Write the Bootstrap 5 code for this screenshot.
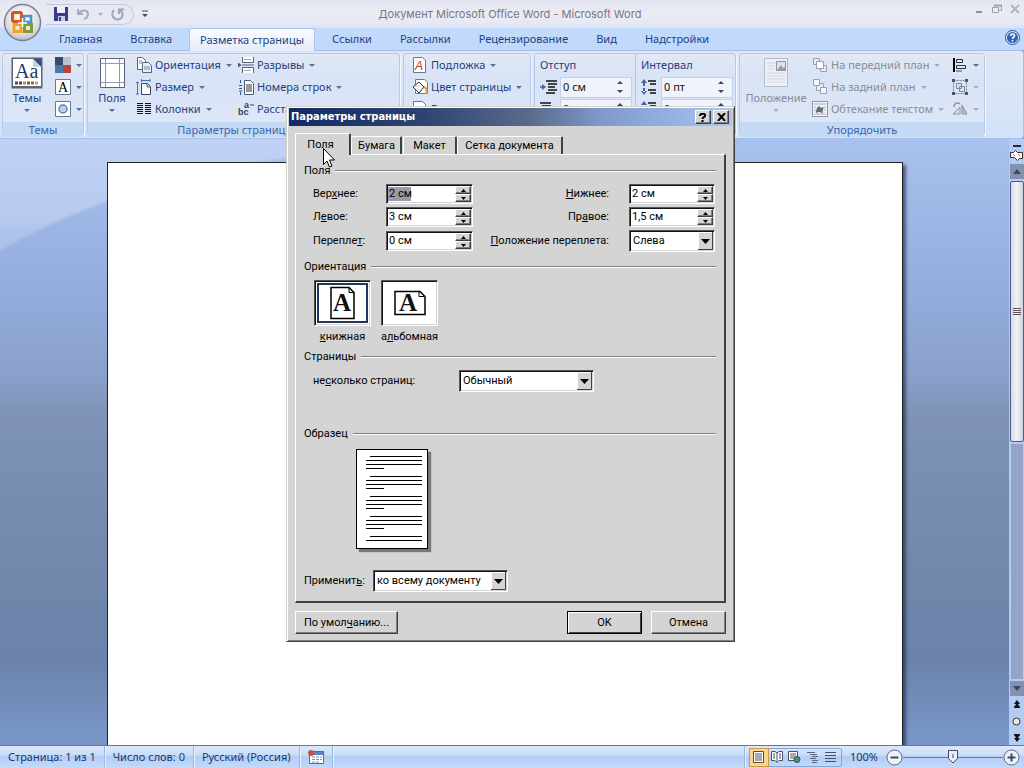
<!DOCTYPE html>
<html lang="ru">
<head>
<meta charset="utf-8">
<meta name="viewport" content="width=device-width, initial-scale=1">
<title>Документ Microsoft Office Word - Microsoft Word</title>
<link href="https://cdn.jsdelivr.net/npm/bootstrap@5.3.0/dist/css/bootstrap.min.css" rel="stylesheet">
<style>
  :root { --ink: #1f4080; --face: #d4d4d4; --shade: #808080; --dark: #404040; }
  body { font: 11px/16px "Noto Sans", "Open Sans", sans-serif; color: var(--ink); background: #8fa8d6; overflow: hidden; }
  svg { display: block; flex: none; }
  button, input, select { font: inherit; color: inherit; }
  button { border: 0; background: none; padding: 0; white-space: nowrap; }
  .shell { min-height: 100vh; }

  /* title bar */
  .titlebar { height: 28px; background: linear-gradient(#e3e6f1, #ebebf3 50%, #e6e9f5 85%, #d6e4fa); }
  .title-side { flex: 1 1 0; }
  .office-btn { top: 3px; left: 3px; z-index: 3; }
  .quick { height: 21px; width: 88px; margin-left: 46px; padding-left: 8px; border: 1px solid #c3c8da; border-left: 0; border-radius: 0 11px 11px 0; background: #e6e8f2; gap: 8px; }
  .doc-title { font: 11px/16px Inter, sans-serif; color: #747884; }
  .win-btns { gap: 8px; padding-right: 4px; }

  /* ribbon */
  .tabrow { height: 22px; padding-left: 45px; background: linear-gradient(#c3dafb, #bfd8fd); }
  .rtab { padding: 0 14px; height: 22px; color: var(--ink); }
  .rtab.on { padding: 0 10px; margin: 0 3px; height: 23px; background: linear-gradient(#fbfcff, #e3ebf8); border: 1px solid #a9c4ee; border-bottom: 0; border-radius: 3px 3px 0 0; }
  .ribbon { height: 89px; padding: 2px; gap: 3px; background: linear-gradient(#dfe7f5, #d9e4f7 60%, #d3e3fa); border: solid #a5bfe6; border-width: 1px 1px 1px 0; border-radius: 0 4px 4px 0; overflow: hidden; }
  .rgroup { border: 1px solid #b7c9e6; border-radius: 3px; background: linear-gradient(#e1e8f6, #d8e3f5 30%, #dee7f8); box-shadow: 1px 1px 0 #f2f6fd; flex: none; }
  .rgroup-body { height: 68px; }
  .rgroup-name { height: 15px; line-height: 15px; text-align: center; background: #c4d9f4; color: #3a66ab; }
  .g-themes { width: 82px; } .g-page { width: 313px; } .g-back { width: 128px; } .g-par { width: 202px; } .g-arr { width: 246px; }
  .g-page .rgroup-name { padding-right: 16px; }
  .big { display: flex; flex-direction: column; align-items: center; padding-top: 3px; }
  .big svg { height: 32px; }
  .big::after, .drop::after { content: ""; border: solid transparent; border-width: 3px 3px 0; border-top-color: #5b7193; }
  .big::after { margin-top: 3px; }
  .big .cap { line-height: 16px; margin-top: 1px; }
  .drop { display: flex; align-items: center; gap: 3px; height: 22px; }
  .drop::after { margin-left: 2px; }
  .w-48 { width: 48px; } .w-72 { width: 72px; } .w-102 { width: 102px; } .w-140 { width: 140px; }
  .off { color: #8a8d96; }
  .off::after { border-top-color: #a6abb8 !important; }
  .spin-col { width: 101px; padding-left: 5px; }
  .spin-col + .spin-col { border-left: 1px solid #b4c5e2; }
  .spin-col .head { height: 22px; line-height: 22px; }
  .spin { display: flex; align-items: center; height: 22px; gap: 3px; }
  .spin .box { width: 72px; height: 21px; border: 1px solid #c2d1ea; background: #f0f3fb; }
  .spin input { width: 52px; border: 0; background: none; padding: 0 2px; color: #111; }
  .spin .arrows { width: 14px; }

  /* work area */
  .work { background: linear-gradient(#a9c1ee, #92abdb 27%, #8aa0cb 39%, #7e93b5 45%, #7288ac 70%, #6b83ab 86%, #7a97ca); }
  .swoosh { inset: 0 auto auto 0; width: 40%; height: 170px; background: radial-gradient(ellipse 620px 420px at 400px 430px, transparent 99%, rgba(225,235,255,.4) 100%); mask-image: linear-gradient(#000 40%, transparent); -webkit-mask-image: linear-gradient(#000 40%, transparent); }
  .paper { width: 796px; margin-top: 23px; background: #fff; border: 1px solid #222; border-bottom: 0; box-shadow: 3px 3px 3px rgba(30,40,70,.65); }
  .scroll { width: 15px; background: #b4cbf3; gap: 2px; padding-top: 6px; }
  .split { width: 8px; height: 2px; background: #222b44; }
  .arrow-cell { width: 14px; height: 15px; background: #8492b0; }
  .thumb { width: 14px; height: 261px; background: linear-gradient(90deg, #d7dae5, #f1f2f7 45%, #cfd3e0); border: 1px solid #4a5c85; border-radius: 2px; }
  .track { width: 12px; background: #95a4c6; }
  .browse { gap: 8px; padding: 2px 0; }

  /* status bar */
  .status { height: 23px; background: linear-gradient(#dde9fb, #c9dcf8 40%, #b3cdf5 50%, #c4daf9); border-top: 1px solid #5d78a8; color: #17366e; line-height: 14px; }
  .status .cell { display: flex; align-items: center; border-right: 1px solid #9cb7e2; box-shadow: 1px 0 0 #e6effc; padding: 0 8px; }
  .views { width: 93px; height: 19px; border: 1px solid #8aa5d3; border-radius: 2px; }
  .views button { width: 18px; height: 17px; display: flex; align-items: center; justify-content: center; }
  .views .on { background: #fbd58c; outline: 1px solid #c99a4c; }
  .zoomer { appearance: none; -webkit-appearance: none; width: 100px; height: 16px; margin: 0; background: linear-gradient(#5f7fb2, #5f7fb2) center/100% 1px no-repeat; }
  .zoomer::-webkit-slider-thumb { -webkit-appearance: none; width: 10px; height: 14px; background: url("data:image/svg+xml,%3Csvg xmlns='http://www.w3.org/2000/svg' width='10' height='14'%3E%3Cpath d='M.5.5h9v8L5 13 .5 8.500z' fill='%23e8effa' stroke='%23446'/%3E%3Cpath d='M5 4v4' stroke='%23446'/%3E%3C/svg%3E"); }

  /* dialog */
  .stage { inset: 0; z-index: 5; padding: 106px 3px 0 0; pointer-events: none; }
  .dlg { font: 11px/16px Roboto, "DejaVu Sans Condensed", sans-serif; color: #000; width: 449px; background: var(--face); padding: 1px 2px; border: 1px solid; border-color: #d4d0c8 #404040 #404040 #d4d0c8; box-shadow: inset 1px 1px #fff, inset -1px -1px #808080; pointer-events: auto; }
  .dlg-title { height: 18px; padding: 0 3px 0 2px; background: linear-gradient(90deg, #142a63, #2f4372 30%, #5b6c8c 55%, #7e98cc 70%, #a8c6f5); color: #fff; font: bold 11px/18px "DejaVu Sans Condensed", sans-serif; }
  .raised { background: var(--face); border: 1px solid; border-color: #fff var(--dark) var(--dark) #fff; box-shadow: inset -1px -1px var(--shade); }
  .dlg-title button { width: 16px; height: 14px; display: flex; align-items: center; justify-content: center; color: #000; }
  .dlg-title button + button { margin-left: 2px; }
  .sheet-tabs { padding-left: 6px; margin-top: 6px; height: 22px; }
  .stab { height: 18px; margin-left: 1px; padding: 0 6px; border: solid; border-width: 1px 2px 0 1px; border-color: #fff var(--dark) #fff #fff; border-radius: 2px 2px 0 0; }
  .stab.on { height: 22px; width: 56px; margin: 0 0 -1px; padding-left: 0; padding-right: 4px; background: var(--face); position: relative; }
  .stab:nth-child(2) { width: 51px; margin-left: 0; } .stab:nth-child(3) { width: 54px; } .stab:nth-child(4) { width: 106px; margin-left: 0; }
  .pane { margin: 0 6px; padding: 8px 8px 9px; border: solid; border-width: 1px 2px 2px 1px; border-color: #fff var(--dark) var(--dark) #fff; }
  fieldset { min-width: 0; }
  .cap-line { display: flex; align-items: center; gap: 5px; height: 16px; float: none; margin: 0; font-size: 11px; line-height: 16px; }
  .cap-line::after { content: ""; flex: 1; height: 2px; background: linear-gradient(#808080 50%, #fff 50%); }
  .margins { display: grid; grid-template-columns: 73px 87px 1fr 86px; grid-template-rows: 20px 20px 22px; row-gap: 3px; align-items: center; padding: 5px 1px 0 9px; }
  .margins .end { text-align: right; padding-right: 20px; }
  .sunk { background: #fff; border: 1px solid; border-color: #555 #fff #fff #555; box-shadow: inset 1px 1px #111, inset -1px -1px var(--face); }
  .num { display: flex; height: 20px; padding: 1px; }
  .num input { flex: 1; width: 20px; min-width: 0; border: 0; padding: 0 0 0 1px; outline: 0; background: none; }
  .num .marked { background: linear-gradient(#9a9ba6, #9a9ba6) 0 50%/23px 14px no-repeat; }
  .num .ud { display: flex; flex-direction: column; }
  .num .ud button { width: 16px; height: 8px; display: flex; align-items: center; justify-content: center; }
  .pick { appearance: none; -webkit-appearance: none; height: 22px; width: 100%; padding: 0 18px 0 3px; border-radius: 0;
    background: #fff url("data:image/svg+xml,%3Csvg xmlns='http://www.w3.org/2000/svg' width='15' height='18'%3E%3Cpath fill='%23d4d4d4' d='M0 0h15v18H0z'/%3E%3Cpath d='M.5 18V.5H15' stroke='%23fff' fill='none'/%3E%3Cpath d='M14.500 0v17.500H0' stroke='%23404040' fill='none'/%3E%3Cpath d='M3 7h9l-4.500 5z'/%3E%3C/svg%3E") right 1px center no-repeat; }
  .orient { margin-top: 7px; }
  .choices { gap: 10px; padding: 5px 0 0 10px; }
  .choice { width: 57px; text-align: center; }
  .choice .sunk { height: 46px; width: 57px; display: flex; align-items: center; justify-content: center; }
  .choice .txt { display: block; margin: 3px -5px 0; }
  .choice input:checked + .sunk { outline: 2px solid #24345e; outline-offset: -5px; }
  .pages-row { padding: 5px 0 0 9px; }
  .pages-row label { width: 146px; }
  .sample { margin-top: 34px; }
  .preview { margin: 7px 0 0 52px; width: 72px; height: 100px; background: #fff; border: 1px solid #000; box-shadow: 3px 3px 1px #777; }
  .apply { margin-top: 21px; }
  .apply label { width: 69px; }
  .w-135 { width: 135px; }
  .dlg-foot { padding: 8px 6px 6px; gap: 9px; }
  .dlg-foot button { height: 23px; width: 75px; }
  .dlg-foot .wide { width: 103px; }
  .dlg-foot .main { outline: 1px solid #000; outline-offset: -1px; border-color: #000; box-shadow: inset 1px 1px #fff, inset -1px -1px var(--dark); }
  .pointer { left: 36px; top: 41px; z-index: 4; }
</style>
</head>
<body>
<div class="shell d-flex flex-column position-relative">

  <header class="position-relative">
    <button class="office-btn position-absolute" aria-label="Office">
      <svg width="39" height="39" viewBox="0 0 39 39">
        <defs><radialGradient id="orb" cx=".5" cy=".35" r=".7"><stop offset="0" stop-color="#fff"/><stop offset=".7" stop-color="#dcdde4"/><stop offset="1" stop-color="#a9acb8"/></radialGradient></defs>
        <circle cx="19.500" cy="19.500" r="18" fill="url(#orb)" stroke="#7d808c" stroke-width="1.500"/>
        <g fill="none" stroke-width="3">
          <rect x="9.500" y="9.500" width="9" height="9" rx="1.500" stroke="#d9541e"/>
          <path d="M21 13h7v6h-7z" stroke="#4b91cc" stroke-width="2.500"/>
          <path d="M11 21.500h7v7h-7z" stroke="#f2a51c"/>
          <path d="M21.500 21.500h7v7h-7z" stroke="#7b9f35"/>
        </g>
        <path d="M15 20h9M19.500 15v9" stroke="#fff" stroke-width="1.500"/>
      </svg>
    </button>
    <div class="titlebar d-flex align-items-center">
      <div class="title-side d-flex align-items-center">
        <div class="quick d-flex align-items-center">
          <button aria-label="Сохранить"><svg width="14" height="14"><path d="M0 0h14v14H0z" fill="#3a3b8c"/><path d="M3 0h8v6H3z" fill="#eef0fa"/><path d="M4 9h7v5H4z" fill="#c8cce8"/><path d="M5 10h2v4H5z" fill="#3a3b8c"/></svg></button>
          <button aria-label="Отменить"><svg width="14" height="12" fill="none" stroke="#a6abba" stroke-width="2"><path d="M2 1v5h5M2.500 5.500C6 1 12 2 12 6c0 2-1 4-4 5"/></svg></button>
          <svg width="5" height="3"><path d="M0 0h5L2.500 3z" fill="#a6abba"/></svg>
          <button aria-label="Вернуть"><svg width="13" height="13" fill="none" stroke="#a0a6b8" stroke-width="2"><path d="M3 2C0 5 1 11 6.500 11.500 12 11 13 5 9 2M8 6V1.500h5"/></svg></button>
        </div>
        <button class="ms-2" aria-label="Настройка панели"><svg width="8" height="8"><path d="M0 1h6" stroke="#4a4a5c"/><path d="M0 4h6L3 7z" fill="#4a4a5c"/></svg></button>
      </div>
      <div class="doc-title">Документ Microsoft Office Word - Microsoft Word</div>
      <div class="title-side win-btns d-flex justify-content-end align-self-start mt-1">
        <button aria-label="Свернуть"><svg width="10" height="10"><path d="M2 8h6" stroke="#8d90a0" stroke-width="2"/></svg></button>
        <button aria-label="Восстановить"><svg width="10" height="10" fill="none" stroke="#a0a3b0"><path d="M.5 3.500h6v5h-6zM2.500 3V1.500h7v5H7"/><path d="M2 1.500h8" stroke-width="2"/></svg></button>
        <button aria-label="Закрыть"><svg width="10" height="10" stroke="#b2b5c0" stroke-width="2"><path d="M1 1l8 8M9 1L1 9"/></svg></button>
      </div>
    </div>
    <nav class="tabrow d-flex">
      <button class="rtab">Главная</button><button class="rtab">Вставка</button><button class="rtab on">Разметка страницы</button><button class="rtab">Ссылки</button><button class="rtab">Рассылки</button><button class="rtab">Рецензирование</button><button class="rtab">Вид</button><button class="rtab">Надстройки</button>
      <button class="ms-auto me-1 mb-1" aria-label="Справка"><svg width="15" height="15"><circle cx="7.500" cy="7.500" r="7" fill="#dfe8f8" stroke="#274f96"/><circle cx="7.500" cy="7.500" r="5.500" fill="#2e63bb"/><path d="M5.500 6c0-3 4.500-2.500 4 0-.3 1-2 1.200-2 3M7.500 10v1.500" fill="none" stroke="#fff" stroke-width="1.600"/></svg></button>
    </nav>

    <div class="ribbon d-flex">
      <section class="rgroup g-themes">
        <div class="rgroup-body d-flex">
          <button class="big w-48"><svg width="32" height="32"><path d="M.5.500h31v31H.5z" fill="#5d6478"/><path d="M2 2h28v27H2z" fill="#fff"/><path d="M22 2h8v8z" fill="#35507c"/><path d="M22 2v8h8" fill="#c9d3e8"/><text x="4" y="21" font-family="Liberation Serif, serif" font-size="20" fill="#203c66">Aa</text><path d="M4 26h3" stroke="#7a3b24" stroke-width="3"/><path d="M8 26h3" stroke="#3d4a66" stroke-width="3"/><path d="M12 26h3" stroke="#c98d2c" stroke-width="3"/><path d="M16 26h3" stroke="#805a3a" stroke-width="3"/><path d="M20 26h3" stroke="#6d7c4a" stroke-width="3"/><path d="M24 26h3" stroke="#c7a54c" stroke-width="3"/></svg><span class="cap">Темы</span></button>
          <div class="ps-1">
            <button class="drop" aria-label="Цвета"><svg width="16" height="16"><path d="M0 0h8v8H0z" fill="#35496b"/><path d="M8 0h8v8H8z" fill="#b9c3d4"/><path d="M0 8h8v8H0z" fill="#4f78a4"/><path d="M8 8h8v8H8z" fill="#b4483f"/></svg></button>
            <button class="drop" aria-label="Шрифты"><svg width="16" height="16"><path d="M.5.500h15v15H.5z" fill="#fff" stroke="#6c7890"/><text x="3" y="13" font-family="Liberation Serif, serif" font-size="14">A</text></svg></button>
            <button class="drop" aria-label="Эффекты"><svg width="16" height="16"><path d="M.5.500h15v15H.5z" fill="#fff" stroke="#6c7890"/><circle cx="8" cy="8" r="4" fill="#b8d2f2" stroke="#5c80b0" stroke-width="1.500"/></svg></button>
          </div>
        </div>
        <div class="rgroup-name">Темы</div>
      </section>

      <section class="rgroup g-page">
        <div class="rgroup-body d-flex">
          <button class="big w-48"><svg width="25" height="32"><path d="M.5 1.500h24v29H.5z" fill="#fff" stroke="#59637c"/><path d="M5.500 2v28M19.500 2v28M1 6.500h23M1 25.500h23" stroke="#8e9ab4"/></svg><span class="cap">Поля</span></button>
          <div class="w-102">
            <button class="drop"><svg width="16" height="16"><path d="M1.500.500h5l3 3v9h-8z" fill="#fff" stroke="#566580"/><path d="M6.500 5.500h6l3 3v7h-9z" fill="#e9eefa" stroke="#566580"/><path d="M3 4h3M3 6h3M8 10h6M8 12h6" stroke="#7d8db0"/></svg>Ориентация</button>
            <button class="drop"><svg width="16" height="16" fill="none" stroke="#4f6ea6"><path d="M1.500 3v12M0 3.500h3M0 15h3M5 1.500h9M5.500 0v3M14 0v3"/><path d="M5.500 4.500h6l3 3v8h-9z" fill="#fff" stroke="#39465f"/><path d="M11 5v3h3" fill="#f0c36a"/></svg>Размер</button>
            <button class="drop"><svg width="16" height="16" stroke="#111" stroke-width="1"><path d="M1 2.500h6M9 2.500h6M1 4.500h6M9 4.500h6M1 6.500h6M9 6.500h6M1 8.500h6M9 8.500h6M1 10.500h6M9 10.500h6M1 12.500h6M9 12.500h6"/></svg>Колонки</button>
          </div>
          <div>
            <button class="drop"><svg width="16" height="16" fill="#fff" stroke="#56647e"><path d="M4.500 0v5.500h11V0M4.500 16v-5.500h11V16"/><path d="M4 8h12" stroke="#56647e"/><path d="M0 6l3 2-3 2z" fill="#33476e"/><path d="M6 2.500h7M6 13.500h7" stroke="#9ab"/></svg>Разрывы</button>
            <button class="drop"><svg width="16" height="16"><path d="M6.500 1.500h6l3 3v11h-9z" fill="#fff" stroke="#4d5a76"/><path d="M8 6h6M8 8h6M8 10h6M8 12h6" stroke="#333"/><path d="M2.500 1v3M1 6.500h3M1 9.500h3M1 12h3M2.500 13v3" stroke="#35548c"/></svg>Номера строк</button>
            <button class="drop"><svg width="16" height="16" font-family="Liberation Sans, sans-serif" font-weight="bold" font-size="9" fill="#35425c"><text x="0" y="14">bc</text><text x="6" y="7">a</text><path d="M12 4h4" stroke="#35425c"/></svg>Расстановка переносов</button>
          </div>
        </div>
        <div class="rgroup-name">Параметры страницы</div>
      </section>

      <section class="rgroup g-back">
        <div class="rgroup-body ps-2">
          <button class="drop"><svg width="16" height="16"><path d="M1.500.500h9l3 3v12h-12z" fill="#fff" stroke="#6b7690"/><text x="3" y="13" font-family="Liberation Sans, sans-serif" font-size="12" font-style="italic" fill="#c0392b">A</text></svg>Подложка</button>
          <button class="drop"><svg width="16" height="16"><path d="M3.500.500h9l3 3v11h-12z" fill="#fff" stroke="#6b7690"/><path d="M1 8l6-5 5 5-5 6z" fill="#f4f4f0" stroke="#333"/><path d="M12 8c3 1 3 4 2 7" stroke="#e39a3b" stroke-width="2" fill="none"/></svg>Цвет страницы</button>
          <button class="drop"><svg width="16" height="16"><path d="M1.500.500h9l3 3v12h-12z" fill="#fff" stroke="#6b7690"/></svg>Границы страниц</button>
        </div>
        <div class="rgroup-name">Фон страницы</div>
      </section>

      <section class="rgroup g-par">
        <div class="rgroup-body d-flex">
          <div class="spin-col">
            <div class="head">Отступ</div>
            <div class="spin"><svg width="17" height="16" stroke="#111" stroke-width="1.500"><path d="M6 2h11M8 5h9M8 8h7M8 11h9M6 14h9"/><path d="M0 8h3" stroke="#47669e"/><path d="M2 5l4 3-4 3z" fill="#47669e" stroke="none"/></svg><div class="box d-flex align-items-center"><input aria-label="Отступ слева" value="0 см"><svg class="arrows" width="14" height="16" fill="#3c4658"><path d="M4 5h6L7 2zM4 11h6l-3 3z"/></svg></div></div>
            <div class="spin"><svg width="17" height="16" stroke="#111" stroke-width="1.500"><path d="M0 2h11M2 5h9M2 8h7M2 11h9M0 14h9"/></svg><div class="box d-flex align-items-center"><input aria-label="Отступ справа" value="0 см"><svg class="arrows" width="14" height="16" fill="#3c4658"><path d="M4 5h6L7 2zM4 11h6l-3 3z"/></svg></div></div>
          </div>
          <div class="spin-col">
            <div class="head">Интервал</div>
            <div class="spin"><svg width="17" height="16"><path d="M7 2h8M9 5h6M7 11h8M9 14h6" stroke="#111" stroke-width="1.500"/><path d="M0 4l3-4 3 4zM0 12l3 4 3-4zM2 3h2v4H2zM2 9h2v4H2z" fill="#47669e"/></svg><div class="box d-flex align-items-center"><input aria-label="Интервал до" value="0 пт"><svg class="arrows" width="14" height="16" fill="#3c4658"><path d="M4 5h6L7 2zM4 11h6l-3 3z"/></svg></div></div>
            <div class="spin"><svg width="17" height="16"><path d="M7 2h8M9 5h6M7 11h8M9 14h6" stroke="#111" stroke-width="1.500"/><path d="M0 4l3-4 3 4z" fill="#47669e"/></svg><div class="box d-flex align-items-center"><input aria-label="Интервал после" value="0 пт"><svg class="arrows" width="14" height="16" fill="#3c4658"><path d="M4 5h6L7 2zM4 11h6l-3 3z"/></svg></div></div>
          </div>
        </div>
        <div class="rgroup-name">Абзац</div>
      </section>

      <section class="rgroup g-arr">
        <div class="rgroup-body d-flex">
          <button class="big w-72 off"><svg width="25" height="32"><path d="M.5 1.500h23v28H.5z" fill="#eef0f6" stroke="#b3b9c9"/><path d="M3 6h8M3 9h8M3 12h8M3 16h18M3 19h18M3 22h18M3 25h18" stroke="#d0d4e0"/><path d="M12.500 4.500h9v9h-9z" fill="#dfe2ea" stroke="#8e95a6"/><path d="M13 13l4-5 2 3 2-1v3z" fill="#969cac"/></svg><span class="cap">Положение</span></button>
          <div class="w-140">
            <button class="drop off"><svg width="16" height="16" fill="#e8ebf2" stroke="#98a0b2"><path d="M1.500 1.500h6v6h-6z"/><path d="M9.500 8.500h5v6h-6v-4"/><path d="M4.500 4.500h7v7h-7z" fill="#fff"/></svg>На передний план</button>
            <button class="drop off"><svg width="16" height="16" fill="#e8ebf2" stroke="#98a0b2"><path d="M4.500 4.500h7v7h-7z"/><path d="M1.500.500h6v6h-6zM8.500 8.500h6v6h-6z" fill="#f6f7fb"/></svg>На задний план</button>
            <button class="drop off"><svg width="16" height="16"><path d="M.5.500h15v15H.5z" fill="#f2f3f7" stroke="#8f96a6"/><path d="M2 3h12M2 6h2M12 6h2M2 9h2M12 9h2M2 13h12" stroke="#a9aebb"/><path d="M4 12c0-4 1-6 3-7 1 2 3 2 5 1-1 2-2 6-1 7-2-2-4-3-7-1z" fill="#666b78"/></svg>Обтекание текстом</button>
          </div>
          <div>
            <button class="drop" aria-label="Выровнять"><svg width="16" height="16" fill="none"><path d="M2 1v14" stroke="#000" stroke-width="2"/><path d="M4.500 2.500h6v3h-6zM4.500 8.500h9v3h-9z" stroke="#333"/><path d="M4 14h6" stroke="#35548c"/></svg></button>
            <button class="drop off" aria-label="Группировать"><svg width="16" height="16" fill="none" stroke="#7d8496"><path d="M1.500 1.500h13v13h-13z" stroke-dasharray="2 1"/><path d="M4.500 4.500h5v5h-5zM7.500 7.500h5v5h-5z"/><path d="M0 1.500h3M13 1.500h3M0 14.500h3M13 14.500h3" stroke="#4d5468" stroke-width="3"/></svg></button>
            <button class="drop off" aria-label="Повернуть"><svg width="16" height="16"><path d="M1 13h7V6z" fill="#d6d9e2" stroke="#8d93a3"/><path d="M10 13V4l5 9z" fill="#b5bac8" stroke="#8d93a3"/><path d="M2 6c0-4 3-5 6-3" fill="none" stroke="#8d93a3" stroke-width="1.500"/></svg></button>
          </div>
        </div>
        <div class="rgroup-name">Упорядочить</div>
      </section>
    </div>
  </header>

  <main class="work flex-grow-1 d-flex position-relative">
    <div class="swoosh position-absolute"></div>
    <div class="flex-grow-1 d-flex justify-content-center overflow-hidden position-relative">
      <div class="paper"></div>
    </div>
    <div class="scroll d-flex flex-column align-items-center">
      <div class="split"></div>
      <svg width="13" height="13"><path d="M.5 3.500h3l2-2 2 2h5v6h-3l-2 2-3-3h-4z" fill="#fff" stroke="#333"/><path d="M3 5l2 2M8 5l2 2" stroke="#c55"/></svg>
      <div class="arrow-cell d-flex align-items-center justify-content-center"><svg width="8" height="5"><path d="M4 0l4 5H0z" fill="#3b4866"/></svg></div>
      <div class="thumb d-flex align-items-center justify-content-center"><svg width="8" height="9"><path d="M0 1.500h8M0 3.500h8M0 5.500h8M0 7.500h8" stroke="#62545c"/></svg></div>
      <div class="track flex-grow-1"></div>
      <div class="arrow-cell d-flex align-items-center justify-content-center"><svg width="8" height="5"><path d="M0 0h8L4 5z" fill="#3b4866"/></svg></div>
      <div class="browse d-flex flex-column align-items-center">
        <svg width="8" height="9"><path d="M4 0l3 4H1zM4 3l3 4H1zM1 7h6v1H1z" fill="#111"/></svg>
        <svg width="9" height="9"><circle cx="4.500" cy="4.500" r="3.500" fill="#e8e8e8" stroke="#333"/></svg>
        <svg width="8" height="9"><path d="M1 0h6v1H1zM1 1h6L4 5zM1 4h6L4 8z" fill="#111"/></svg>
      </div>
    </div>
  </main>

  <footer class="status d-flex">
    <div class="cell">Страница: 1 из 1</div>
    <div class="cell">Число слов: 0</div>
    <div class="cell">Русский (Россия)</div>
    <div class="cell"><svg width="16" height="14"><path d="M1.500 1.500h14v12h-14z" fill="#fff" stroke="#4d6a9c"/><path d="M2 2h13v3H2z" fill="#5d86c4"/><path d="M4 7h3M8 7h3M12 7h2M4 9.500h3M8 9.500h3M12 9.500h2M4 12h3M8 12h3" stroke="#7d93b8"/><circle cx="3" cy="3" r="3" fill="#c4553c"/></svg></div>
    <div class="cell flex-grow-1"></div>
    <div class="d-flex align-items-center ps-1">
      <div class="views d-flex">
        <button class="on" aria-label="Разметка страницы"><svg width="11" height="12"><path d="M.5.500h10v11H.5z" fill="#fff" stroke="#5d4c33"/><path d="M2 3h7M2 5h7M2 7h7M2 9h7" stroke="#555"/></svg></button>
        <button aria-label="Режим чтения"><svg width="12" height="12" fill="#fff" stroke="#44506a"><path d="M6 2L4 .5H.5v9H4l2 2 2-2h3.500v-9H8zM6 2v9M2 3h2M2 5h2M2 7h2M8 3h2M8 5h2M8 7h2"/></svg></button>
        <button aria-label="Веб-документ"><svg width="13" height="12"><path d="M.5.500h9v9h-9z" fill="#fff" stroke="#44506a"/><path d="M2 3h6M2 5h6M2 7h4" stroke="#555"/><circle cx="9" cy="8.500" r="3" fill="#4a8f6a" stroke="#35507c"/></svg></button>
        <button aria-label="Структура"><svg width="12" height="12" stroke="#5b6780"><path d="M0 1.500h8M3 3.500h7M5 5.500h6M3 7.500h6M5 9.500h6M5 11.500h5"/></svg></button>
        <button aria-label="Черновик"><svg width="12" height="12" stroke="#454f66"><path d="M0 1.500h11M0 4.500h11M0 7.500h11M0 10.500h11"/></svg></button>
      </div>
      <span class="px-2">100%</span>
      <button aria-label="Уменьшить"><svg width="17" height="17"><circle cx="8.500" cy="8.500" r="7.500" fill="#eef1f8" stroke="#5d6a86"/><path d="M4.500 8.500h8" stroke="#3d4a68" stroke-width="2"/></svg></button>
      <input class="zoomer" type="range" value="50" aria-label="Масштаб">
      <button class="me-1" aria-label="Увеличить"><svg width="17" height="17"><circle cx="8.500" cy="8.500" r="7.500" fill="#eef1f8" stroke="#5d6a86"/><path d="M4.500 8.500h8M8.500 4.500v8" stroke="#3d4a68" stroke-width="2"/></svg></button>
    </div>
  </footer>

  <div class="stage position-absolute d-flex justify-content-center align-items-start">
    <form class="dlg position-relative" role="dialog" aria-label="Параметры страницы" onsubmit="return false">
      <div class="dlg-title d-flex align-items-center">
        <span class="me-auto">Параметры страницы</span>
        <button type="button" class="raised" aria-label="Справка"><svg width="8" height="9" fill="none" stroke="#000" stroke-width="2"><path d="M1 3c0-3 6-3 5 0-.5 1.500-2.500 1-2.500 3M3.500 7v2"/></svg></button>
        <button type="button" class="raised" aria-label="Закрыть"><svg width="9" height="8" stroke="#000" stroke-width="2"><path d="M1 0l7 8M8 0L1 8"/></svg></button>
      </div>
      <div class="sheet-tabs d-flex align-items-end" role="tablist">
        <button type="button" class="stab on" role="tab">Поля</button><button type="button" class="stab" role="tab">Бумага</button><button type="button" class="stab" role="tab">Макет</button><button type="button" class="stab" role="tab">Сетка документа</button>
      </div>
      <div class="pane">
        <fieldset>
          <legend class="cap-line">Поля</legend>
          <div class="margins">
            <label for="top">Вер<u>х</u>нее:</label>
            <div class="num sunk"><input id="top" class="marked" value="2 см"><span class="ud"><button type="button" class="raised" aria-label="Больше"><svg width="5" height="3"><path d="M0 3h5L2.500 0z"/></svg></button><button type="button" class="raised" aria-label="Меньше"><svg width="5" height="3"><path d="M0 0h5L2.500 3z"/></svg></button></span></div>
            <label class="end" for="bottom"><u>Н</u>ижнее:</label>
            <div class="num sunk"><input id="bottom" value="2 см"><span class="ud"><button type="button" class="raised" aria-label="Больше"><svg width="5" height="3"><path d="M0 3h5L2.500 0z"/></svg></button><button type="button" class="raised" aria-label="Меньше"><svg width="5" height="3"><path d="M0 0h5L2.500 3z"/></svg></button></span></div>
            <label for="left">Л<u>е</u>вое:</label>
            <div class="num sunk"><input id="left" value="3 см"><span class="ud"><button type="button" class="raised" aria-label="Больше"><svg width="5" height="3"><path d="M0 3h5L2.500 0z"/></svg></button><button type="button" class="raised" aria-label="Меньше"><svg width="5" height="3"><path d="M0 0h5L2.500 3z"/></svg></button></span></div>
            <label class="end" for="right">Пр<u>а</u>вое:</label>
            <div class="num sunk"><input id="right" value="1,5 см"><span class="ud"><button type="button" class="raised" aria-label="Больше"><svg width="5" height="3"><path d="M0 3h5L2.500 0z"/></svg></button><button type="button" class="raised" aria-label="Меньше"><svg width="5" height="3"><path d="M0 0h5L2.500 3z"/></svg></button></span></div>
            <label for="gutter">Перепле<u>т</u>:</label>
            <div class="num sunk"><input id="gutter" value="0 см"><span class="ud"><button type="button" class="raised" aria-label="Больше"><svg width="5" height="3"><path d="M0 3h5L2.500 0z"/></svg></button><button type="button" class="raised" aria-label="Меньше"><svg width="5" height="3"><path d="M0 0h5L2.500 3z"/></svg></button></span></div>
            <label class="end text-nowrap" for="gpos"><u>П</u>оложение переплета:</label>
            <select id="gpos" class="pick sunk"><option>Слева</option></select>
          </div>
        </fieldset>
        <fieldset class="orient">
          <legend class="cap-line">Ориентация</legend>
          <div class="choices d-flex">
            <label class="choice"><input class="visually-hidden" type="radio" name="orient" checked><span class="sunk"><svg width="28" height="34"><path d="M2 1.500h18l5 5v26H2z" fill="#fff" stroke="#000" stroke-width="1.500"/><path d="M20 1.500v5h5" fill="none" stroke="#000"/><text x="4" y="25" font-family="Liberation Serif, serif" font-weight="bold" font-size="25" fill="#111">A</text></svg></span><span class="txt"><u>к</u>нижная</span></label>
            <label class="choice"><input class="visually-hidden" type="radio" name="orient"><span class="sunk"><svg width="34" height="28"><path d="M2 2.500h25l5 5v18H2z" fill="#fff" stroke="#000" stroke-width="1.500"/><path d="M26 2.500v5h5" fill="none" stroke="#000"/><text x="6" y="22" font-family="Liberation Serif, serif" font-weight="bold" font-size="25" fill="#111">A</text></svg></span><span class="txt">а<u>л</u>ьбомная</span></label>
          </div>
        </fieldset>
        <fieldset class="mt-1">
          <legend class="cap-line">Страницы</legend>
          <div class="pages-row d-flex align-items-center">
            <label for="multi">не<u>с</u>колько страниц:</label>
            <div class="w-135"><select id="multi" class="pick sunk"><option>Обычный</option></select></div>
          </div>
        </fieldset>
        <fieldset class="sample">
          <legend class="cap-line">Образец</legend>
          <div class="preview">
            <svg width="70" height="98" stroke="#000"><path d="M13 6.500h52M9 10.500h56M9 14.500h56M9 18.500h18M13 26.500h52M9 30.500h56M9 34.500h56M9 38.500h18M13 46.500h52M9 50.500h56M9 54.500h56M9 58.500h18M13 66.500h52M9 70.500h56M9 74.500h56M9 78.500h18M13 86.500h52M9 90.500h56"/></svg>
          </div>
          <div class="apply d-flex align-items-center">
            <label for="scope">Применит<u>ь</u>:</label>
            <div class="w-135"><select id="scope" class="pick sunk"><option>ко всему документу</option></select></div>
          </div>
        </fieldset>
      </div>
      <div class="dlg-foot d-flex">
        <button type="button" class="raised wide me-auto">По умол<u>ч</u>анию...</button>
        <button type="submit" class="raised main">OK</button>
        <button type="button" class="raised">Отмена</button>
      </div>
      <svg class="pointer position-absolute" width="13" height="20"><path d="M.5.500v16l3.500-3.500 2.500 6 2.500-1-2.500-6h5z" fill="#fff" stroke="#000"/></svg>
    </form>
  </div>
</div>
<script src="https://cdn.jsdelivr.net/npm/bootstrap@5.3.0/dist/js/bootstrap.bundle.min.js"></script>
</body>
</html>
